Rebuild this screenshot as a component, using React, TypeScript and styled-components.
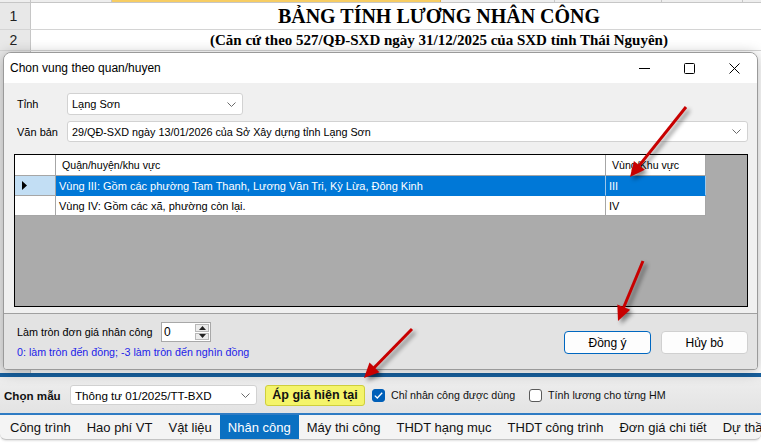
import React from "react";
import styled, { createGlobalStyle } from "styled-components";

const GlobalStyle = createGlobalStyle`
  html, body { margin: 0; padding: 0; background: #fff; }
  body { width: 761px; height: 446px; overflow: hidden; font-family: "Liberation Sans", Arial, sans-serif; }
  *, *::before, *::after { box-sizing: border-box; }
`;

const UI = `"Liberation Sans", Arial, sans-serif`;

const Page = styled.div`
  position: relative;
  width: 761px;
  height: 446px;
  overflow: hidden;
  display: flex;
  flex-direction: column;
  background: #fff;
  font-family: ${UI};
`;

/* ---------- spreadsheet behind the dialog ---------- */
const Sheet = styled.div`
  position: relative;
  height: 373px;
  flex: none;
  display: flex;
  flex-direction: column;
  background: linear-gradient(to right, #e8e8e8 0, #e8e8e8 30px, #c6c6c6 30px, #c6c6c6 31px, #fff 31px);
`;

const ColHeader = styled.div`
  height: 3px;
  flex: none;
  display: flex;
  border-bottom: 1px solid #c6c6c6;
`;

const ColSeg = styled.div<{ $w: number; $active?: boolean }>`
  width: ${(p) => p.$w}px;
  flex: none;
  background: ${(p) => (p.$active ? "#f7cd63" : "#eeeeee")};
  border-right: 1px solid ${(p) => (p.$active ? "#e2b040" : "#c6c6c6")};
`;

const SheetRow = styled.div<{ $h: number }>`
  height: ${(p) => p.$h}px;
  flex: none;
  display: flex;
  border-bottom: 1px solid #d4d4d4;
  overflow: hidden;
`;

const RowNum = styled.div`
  width: 31px;
  flex: none;
  background: #e8e8e8;
  border-right: 1px solid #c6c6c6;
  display: flex;
  align-items: center;
  justify-content: center;
  font: 14px ${UI};
  color: #222;
  padding-right: 3px;
`;

const MergedCell = styled.div<{ $size: number }>`
  width: 816px;
  flex: none;
  display: flex;
  align-items: center;
  justify-content: center;
  font-family: "Liberation Serif", "Times New Roman", serif;
  font-weight: 700;
  font-size: ${(p) => p.$size}px;
  white-space: nowrap;
  color: #000;
`;

/* ---------- dialog ---------- */
const Dialog = styled.div`
  position: absolute;
  top: 52px;
  left: 3px;
  width: 755px;
  height: 318px;
  display: flex;
  flex-direction: column;
  border: 1px solid #9a9a9a;
  border-radius: 8px 8px 4px 4px;
  background: #f0f0f0;
  box-shadow: 0 2px 14px rgba(0, 0, 0, 0.28);
  overflow: hidden;
`;

const TitleBar = styled.div`
  height: 30px;
  flex: none;
  display: flex;
  align-items: center;
  background: #fff;
  padding-left: 6px;
`;

const TitleText = styled.div`
  flex: 1;
  font-size: 12px;
  color: #000;
`;

const WinBtn = styled.div`
  width: 45px;
  height: 30px;
  display: flex;
  align-items: center;
  justify-content: center;
`;

const Body = styled.div`
  height: 230px;
  flex: none;
  display: flex;
  flex-direction: column;
  padding: 10px 9px 0 10px;
`;

const FormRow = styled.div<{ $mt?: number; $pl?: number }>`
  display: flex;
  align-items: center;
  padding-left: ${(p) => p.$pl ?? 3}px;
  margin-top: ${(p) => p.$mt ?? 0}px;
`;

const FieldLabel = styled.div`
  width: 50px;
  flex: none;
  font-size: 11px;
  color: #000;
`;

const Combo = styled.div<{ $w?: number; $h: number; $fs?: number }>`
  ${(p) => (p.$w ? `width: ${p.$w}px; flex: none;` : "flex: 1;")}
  height: ${(p) => p.$h}px;
  display: flex;
  align-items: center;
  justify-content: space-between;
  background: #fff;
  border: 1px solid #d2d2d2;
  border-radius: 3px;
  padding: 0 6px 0 4px;
  font-size: ${(p) => p.$fs ?? 11}px;
  color: #000;
  white-space: nowrap;
`;

const Grid = styled.div`
  margin-top: 12px;
  height: 153px;
  flex: none;
  border: 1px solid #000;
  background: #ababab;
  display: flex;
  flex-direction: column;
`;

const GridRow = styled.div<{ $h: number }>`
  height: ${(p) => p.$h}px;
  flex: none;
  display: flex;
`;

const RowHead = styled.div<{ $sel?: boolean }>`
  width: 41px;
  flex: none;
  background: ${(p) => (p.$sel ? "#c2def4" : "#fff")};
  border-right: 1px solid #a6a6a6;
  border-bottom: 1px solid #a6a6a6;
  display: flex;
  align-items: center;
  padding-left: 7px;
`;

const Cell = styled.div<{ $w: number; $sel?: boolean; $head?: boolean }>`
  width: ${(p) => p.$w}px;
  flex: none;
  background: ${(p) => (p.$sel ? "#0078d7" : "#fff")};
  color: ${(p) => (p.$sel ? "#fff" : "#000")};
  border-right: 1px solid ${(p) => (p.$sel ? "#9cc6ea" : "#a6a6a6")};
  border-bottom: 1px solid ${(p) => (p.$sel ? "#0078d7" : "#a6a6a6")};
  display: flex;
  align-items: center;
  padding-left: ${(p) => (p.$head ? 6 : 3)}px;
  font-size: ${(p) => (p.$head ? 10.6 : 11)}px;
  white-space: nowrap;
  overflow: hidden;
`;

const Separator = styled.div`
  height: 1px;
  flex: none;
  background: #a0a0a0;
`;

const Footer = styled.div`
  flex: 1;
  display: flex;
  justify-content: space-between;
  align-items: flex-start;
  background: #e3e3e3;
  padding: 8px 9px 0 13px;
`;

const FooterLeft = styled.div`
  display: flex;
  flex-direction: column;
`;

const RoundLabel = styled.div`
  width: 144px;
  flex: none;
  font-size: 10.8px;
  color: #000;
  white-space: nowrap;
`;

const Spinner = styled.div`
  width: 50px;
  height: 20px;
  display: flex;
  background: #fff;
  border: 1px solid #a8a8a8;
`;

const SpinValue = styled.div`
  flex: 1;
  font-size: 12px;
  padding: 2px 0 0 2px;
`;

const SpinButtons = styled.div`
  width: 15px;
  display: flex;
  flex-direction: column;
  gap: 1px;
  padding: 1px 1px 1px 0;
`;

const SpinBtn = styled.div`
  flex: 1;
  background: #ececec;
  border: 1px solid #b8b8b8;
  display: flex;
  align-items: center;
  justify-content: center;
`;

const Hint = styled.div`
  margin-top: 4px;
  font-size: 10.7px;
  color: #2222e8;
  white-space: nowrap;
`;

const Buttons = styled.div`
  display: flex;
  gap: 10px;
  margin-top: 9px;
`;

const DlgButton = styled.div<{ $primary?: boolean }>`
  width: 87px;
  height: 23px;
  display: flex;
  align-items: center;
  justify-content: center;
  background: #fdfdfd;
  border: 1px solid ${(p) => (p.$primary ? "#0067c0" : "#d0d0d0")};
  border-radius: 4px;
  font-size: 12px;
  color: #000;
`;

/* ---------- main application bars ---------- */
const BlueRule = styled.div<{ $h: number; $c: string }>`
  height: ${(p) => p.$h}px;
  flex: none;
  background: ${(p) => p.$c};
`;

const Toolbar = styled.div`
  height: 36px;
  flex: none;
  display: flex;
  align-items: center;
  padding-left: 4px;
  background: linear-gradient(#eeeeee, #e3e3e3);
`;

const BoldLabel = styled.div`
  font-size: 11.6px;
  font-weight: 700;
  color: #111;
  width: 66px;
  flex: none;
`;

const ApplyButton = styled.div`
  margin-left: 8px;
  width: 100px;
  height: 21px;
  display: flex;
  align-items: center;
  justify-content: center;
  background: #f4f46a;
  border: 1px solid #cfcf3c;
  border-radius: 3px;
  font-size: 12.5px;
  font-weight: 700;
  color: #111;
`;

const CheckItem = styled.div<{ $ml: number }>`
  display: flex;
  align-items: center;
  gap: 6px;
  margin-left: ${(p) => p.$ml}px;
  font-size: 10.7px;
  color: #111;
  white-space: nowrap;
`;

const Box = styled.div<{ $on?: boolean }>`
  width: 13px;
  height: 13px;
  border-radius: 3px;
  background: ${(p) => (p.$on ? "#005fb8" : "#fff")};
  border: 1px solid ${(p) => (p.$on ? "#005fb8" : "#5a5a5a")};
  display: flex;
  align-items: center;
  justify-content: center;
`;

const Tabs = styled.div`
  height: 25px;
  flex: none;
  display: flex;
  align-items: stretch;
  padding-left: 2px;
  background: #f4f4f4;
  border-bottom: 1px solid #c4c4c4;
  border-radius: 0 0 6px 6px;
  box-shadow: 0 1px 2px rgba(0, 0, 0, 0.12);
  overflow: hidden;
`;

const Tab = styled.div<{ $active?: boolean }>`
  display: flex;
  align-items: center;
  padding: 0 8px;
  white-space: nowrap;
  font-size: 13px;
  background: ${(p) => (p.$active ? "#0a70c2" : "transparent")};
  color: ${(p) => (p.$active ? "#fff" : "#111")};
`;

const Overlay = styled.svg`
  position: absolute;
  left: 0;
  top: 0;
  width: 761px;
  height: 446px;
  pointer-events: none;
  filter: drop-shadow(3px 3px 2px rgba(0, 0, 0, 0.45));
`;

const Chevron = () => (
  <svg width="9" height="5" viewBox="0 0 9 5">
    <path d="M0.5 0.5 L4.5 4.5 L8.5 0.5" fill="none" stroke="#6a6a6a" strokeWidth="1" />
  </svg>
);

type P = [number, number];
const RedArrow = ({ tail, tip }: { tail: P; tip: P }) => {
  const dx = tip[0] - tail[0];
  const dy = tip[1] - tail[1];
  const len = Math.hypot(dx, dy);
  const ux = dx / len;
  const uy = dy / len;
  const hl = 15;
  const hw = 7;
  const bx = tip[0] - ux * hl;
  const by = tip[1] - uy * hl;
  const px = -uy * hw;
  const py = ux * hw;
  return (
    <g>
      <line x1={tail[0]} y1={tail[1]} x2={bx + ux * 2} y2={by + uy * 2} stroke="#c80000" strokeWidth="3" />
      <polygon
        points={`${tip[0]},${tip[1]} ${bx + px},${by + py} ${bx - px},${by - py}`}
        fill="#c80000"
      />
    </g>
  );
};

const topSegs: { w: number; a?: boolean }[] = [
  { w: 31 },
  { w: 81 },
  { w: 329, a: true },
  { w: 114 },
  { w: 107 },
  { w: 81 },
  { w: 30 },
];

const tabs = [
  "Công trình",
  "Hao phí VT",
  "Vật liệu",
  "Nhân công",
  "Máy thi công",
  "THDT hạng mục",
  "THDT công trình",
  "Đơn giá chi tiết",
  "Dự thầu",
];

export default function App() {
  return (
    <Page>
      <GlobalStyle />
      <Sheet>
        <ColHeader>
          {topSegs.map((s, i) => (
            <ColSeg key={i} $w={s.w} $active={s.a} />
          ))}
        </ColHeader>
        <SheetRow $h={27}>
          <RowNum>1</RowNum>
          <MergedCell $size={20}>BẢNG TÍNH LƯƠNG NHÂN CÔNG</MergedCell>
        </SheetRow>
        <SheetRow $h={21}>
          <RowNum>2</RowNum>
          <MergedCell $size={15}>(Căn cứ theo 527/QĐ-SXD ngày 31/12/2025 của SXD tỉnh Thái Nguyên)</MergedCell>
        </SheetRow>

        <Dialog>
          <TitleBar>
            <TitleText>Chon vung theo quan/huyen</TitleText>
            <WinBtn>
              <svg width="11" height="11" viewBox="0 0 11 11">
                <path d="M0 5.5 H11" stroke="#000" strokeWidth="1" />
              </svg>
            </WinBtn>
            <WinBtn>
              <svg width="11" height="11" viewBox="0 0 11 11">
                <rect x="0.5" y="0.5" width="10" height="10" rx="1" fill="none" stroke="#000" strokeWidth="1" />
              </svg>
            </WinBtn>
            <WinBtn>
              <svg width="11" height="11" viewBox="0 0 11 11">
                <path d="M0.5 0.5 L10.5 10.5 M10.5 0.5 L0.5 10.5" stroke="#000" strokeWidth="1" />
              </svg>
            </WinBtn>
          </TitleBar>
          <Body>
            <FormRow>
              <FieldLabel>Tỉnh</FieldLabel>
              <Combo $w={176} $h={22}>
                <span>Lạng Sơn</span>
                <Chevron />
              </Combo>
            </FormRow>
            <FormRow $mt={6}>
              <FieldLabel>Văn bản</FieldLabel>
              <Combo $h={21} $fs={10.8}>
                <span>29/QĐ-SXD ngày 13/01/2026 của Sở Xây dựng tỉnh Lạng Sơn</span>
                <Chevron />
              </Combo>
            </FormRow>
            <Grid>
              <GridRow $h={21}>
                <RowHead />
                <Cell $w={550} $head>Quận/huyện/khu vực</Cell>
                <Cell $w={100} $head>Vùng/Khu vực</Cell>
              </GridRow>
              <GridRow $h={20}>
                <RowHead $sel>
                  <svg width="5" height="9" viewBox="0 0 5 9">
                    <polygon points="0,0 5,4.5 0,9" fill="#000" />
                  </svg>
                </RowHead>
                <Cell $w={550} $sel>Vùng III: Gồm các phường Tam Thanh, Lương Văn Tri, Kỳ Lừa, Đông Kinh</Cell>
                <Cell $w={100} $sel>III</Cell>
              </GridRow>
              <GridRow $h={20}>
                <RowHead />
                <Cell $w={550}>Vùng IV: Gồm các xã, phường còn lại.</Cell>
                <Cell $w={100}>IV</Cell>
              </GridRow>
            </Grid>
          </Body>
          <Separator />
          <Footer>
            <FooterLeft>
              <FormRow $pl={0}>
                <RoundLabel>Làm tròn đơn giá nhân công</RoundLabel>
                <Spinner>
                  <SpinValue>0</SpinValue>
                  <SpinButtons>
                    <SpinBtn>
                      <svg width="7" height="4" viewBox="0 0 7 4">
                        <polygon points="0,4 3.5,0 7,4" fill="#222" />
                      </svg>
                    </SpinBtn>
                    <SpinBtn>
                      <svg width="7" height="4" viewBox="0 0 7 4">
                        <polygon points="0,0 7,0 3.5,4" fill="#222" />
                      </svg>
                    </SpinBtn>
                  </SpinButtons>
                </Spinner>
              </FormRow>
              <Hint>0: làm tròn đến đồng; -3 làm tròn đến nghìn đồng</Hint>
            </FooterLeft>
            <Buttons>
              <DlgButton $primary>Đồng ý</DlgButton>
              <DlgButton>Hủy bỏ</DlgButton>
            </Buttons>
          </Footer>
        </Dialog>
      </Sheet>

      <BlueRule $h={4} $c="#17609f" />
      <Toolbar>
        <BoldLabel>Chọn mẫu</BoldLabel>
        <Combo $w={187} $h={20} $fs={11.6}>
          <span>Thông tư 01/2025/TT-BXD</span>
          <Chevron />
        </Combo>
        <ApplyButton>Áp giá hiện tại</ApplyButton>
        <CheckItem $ml={7}>
          <Box $on>
            <svg width="9" height="7" viewBox="0 0 9 7">
              <path d="M0.8 3.6 L3.3 6 L8.2 0.8" fill="none" stroke="#fff" strokeWidth="1.3" />
            </svg>
          </Box>
          <span>Chỉ nhân công được dùng</span>
        </CheckItem>
        <CheckItem $ml={14}>
          <Box />
          <span>Tính lương cho từng HM</span>
        </CheckItem>
      </Toolbar>
      <BlueRule $h={2} $c="#2f7cc4" />
      <Tabs>
        {tabs.map((t) => (
          <Tab key={t} $active={t === "Nhân công"}>
            {t}
          </Tab>
        ))}
      </Tabs>

      <Overlay viewBox="0 0 761 446">
        <RedArrow tail={[686, 107]} tip={[630, 177]} />
        <RedArrow tail={[643, 261]} tip={[618, 321]} />
        <RedArrow tail={[412, 329]} tip={[364, 378]} />
      </Overlay>
    </Page>
  );
}
